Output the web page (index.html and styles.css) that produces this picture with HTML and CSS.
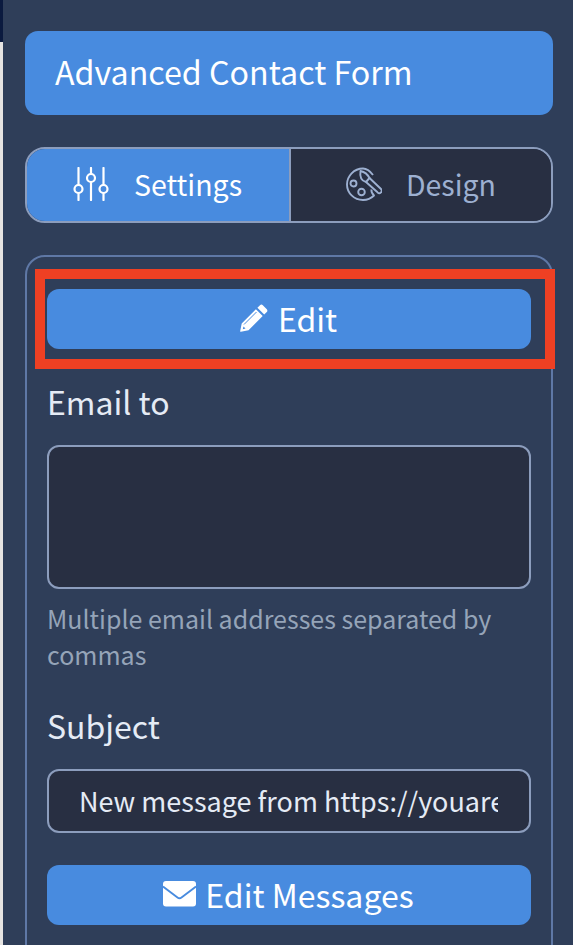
FILE: index.html
```html
<!DOCTYPE html>
<html lang="en">
<head>
<meta charset="utf-8">
<title>Advanced Contact Form</title>
<link rel="stylesheet" href="styles.css">
</head>
<body>
<div class="edge"><div class="edge-top"></div></div>
<main class="sidebar">
  <h1 class="title">Advanced Contact Form</h1>
  <div class="tabs">
    <div class="tab tab-active">
      <svg class="tab-icon" viewBox="0 0 36 34" fill="none" stroke="currentColor" stroke-width="2.200" stroke-linecap="round">
        <path d="M5.500 1v16.500M5.500 26.500v6.500M18 1v5.500M18 15.500v17.500M30.500 1v16.500M30.500 26.500v6.500"/>
        <circle cx="5.500" cy="22" r="4"/><circle cx="18" cy="11" r="4"/><circle cx="30.500" cy="22" r="4"/>
      </svg>
      <span>Settings</span>
    </div>
    <div class="tab tab-idle">
      <svg class="tab-icon" viewBox="0 0 36 34" fill="none" stroke="currentColor" stroke-width="1.900" stroke-linejoin="round">
        <path d="M27 8C24 4 20.500 1.500 17 1.500 8 1.500 1 9 1 17.500 1 26 8 33 17 33c3.500 0 8-1.500 11-4.500-2-2-3-3.500-2.500-6"/>
        <circle cx="7.500" cy="16.500" r="3"/><circle cx="15.500" cy="25" r="3.300"/>
        <path d="M14.500 4C19 5 22 8 23.500 11L20 15C16 14 13.500 10.500 14.500 4z"/>
        <path d="M23.500 11 35 22c1 1 1 2.500 0 3.300-1 1-2.500 1-3.500 0L20 15"/>
      </svg>
      <span>Design</span>
    </div>
  </div>
  <section class="panel">
    <div class="highlight">
      <button class="btn btn-edit" type="button">
        <svg class="btn-icon-edit" viewBox="0 0 28 28" fill="currentColor" fill-rule="evenodd">
          <path d="M20 1.200c.8-.8 2-.8 2.800 0l4 4c.8.800.8 2 0 2.800l-2.600 2.600-6.800-6.800z"/>
          <path d="M15.900 5.300l6.800 6.800L8.500 26.300.9 27.800c-.5.100-.8-.2-.7-.7L1.700 19.500zM3.500 22.500l-.7 2.700 2.700-.7z"/>
          <path class="pencil-line" d="M4 20.500 16.500 8"/>
        </svg>
        <span>Edit</span>
      </button>
    </div>
    <label class="label label-email">Email to</label>
    <div class="textarea"></div>
    <p class="hint">Multiple email addresses separated by commas</p>
    <label class="label label-subject">Subject</label>
    <div class="input"><span class="input-text">New message from https://youarewelcome.example</span></div>
    <button class="btn btn-messages" type="button">
      <svg class="btn-icon-mail" viewBox="0 0 33 26">
        <rect width="33" height="25.500" rx="3" fill="currentColor"/>
        <path class="mail-flap" d="M0 5.500l14.500 11c1.200.9 2.800.9 4 0L33 5.500"/>
      </svg>
      <span>Edit Messages</span>
    </button>
  </section>
</main>
</body>
</html>
```
FILE: styles.css
```css
* { box-sizing: border-box; }
html, body { margin: 0; padding: 0; height: 945px; overflow: hidden; }
body {
  display: flex;
  background: #2f3e59;
  font-family: "Noto Sans CJK JP", "Noto Sans", sans-serif;
  color: #fff;
}
.edge { width: 3px; flex: none; background: #e6e4e2; }
.edge-top { height: 42px; background: #0b1a3f; }
.sidebar { width: 550px; padding: 31px 0 0 22px; flex: none; }
.title {
  margin: 0;
  width: 528px;
  height: 84px;
  padding-left: 30px;
  background: #488bdf;
  border-radius: 13px;
  font-size: 32.200px;
  font-weight: 400;
  line-height: 80px;
}
.tabs {
  display: flex;
  width: 528px;
  height: 76px;
  margin-top: 32px;
  border: 2px solid #8c9dbd;
  border-radius: 20px;
  overflow: hidden;
}
.tab {
  display: flex;
  align-items: center;
  justify-content: center;
  padding-bottom: 3px;
  font-size: 28.500px;
  line-height: 40px;
}
.tab-active { width: 264px; gap: 25px; padding-right: 1px; background: #488bdf; color: #fff; border-right: 2px solid #8c9dbd; }
.tab-idle { flex: 1; gap: 24px; background: #282f42; color: #9db0d1; }
.tab-icon { width: 36px; height: 34px; flex: none; }
.panel {
  width: 528px;
  height: 720px;
  margin-top: 32px;
  padding: 12px 0 0 8px;
  border: 2px solid #5f78a6;
  border-radius: 20px 20px 0 0;
}
.highlight {
  width: 520px;
  height: 100px;
  padding: 10px 2px;
  border: 10px solid #ee4023;
}
.btn {
  display: flex;
  align-items: center;
  justify-content: center;
  width: 484px;
  height: 60px;
  padding: 0 0 3px;
  border: 0;
  border-radius: 12px;
  background: #488bdf;
  color: #fff;
  font: inherit;
  font-size: 32px;
  line-height: 54px;
}
.btn-edit { gap: 10px; padding-right: 1px; }
.btn-icon-edit { width: 28px; height: 28px; flex: none; }
.pencil-line { fill: none; stroke: #488bdf; stroke-width: 1; }
.btn-icon-mail { width: 33px; height: 26px; flex: none; }
.mail-flap { fill: none; stroke: #488bdf; stroke-width: 1.800; }
.btn-messages { gap: 9px; padding-right: 1px; margin: 32px 0 0 12px; }
.label {
  display: block;
  margin-left: 12px;
  font-size: 32px;
  line-height: 44px;
  color: #e5ebf5;
}
.label-email { margin-top: 10px; }
.textarea {
  width: 484px;
  height: 144px;
  margin: 22px 0 0 12px;
  background: #282f42;
  border: 2px solid #8c9dbd;
  border-radius: 12px;
}
.hint {
  width: 484px;
  margin: 11px 0 0 12px;
  font-size: 25px;
  line-height: 36px;
  color: #95a4b8;
}
.label-subject { margin-top: 31px; }
.input {
  width: 484px;
  height: 64px;
  margin: 22px 0 0 12px;
  padding: 0 31px 0 30px;
  background: #282f42;
  border: 2px solid #8c9dbd;
  border-radius: 12px;
  overflow: hidden;
}
.input-text {
  display: block;
  overflow: hidden;
  white-space: nowrap;
  font-size: 27px;
  line-height: 60px;
  color: #e5ebf5;
}
```
